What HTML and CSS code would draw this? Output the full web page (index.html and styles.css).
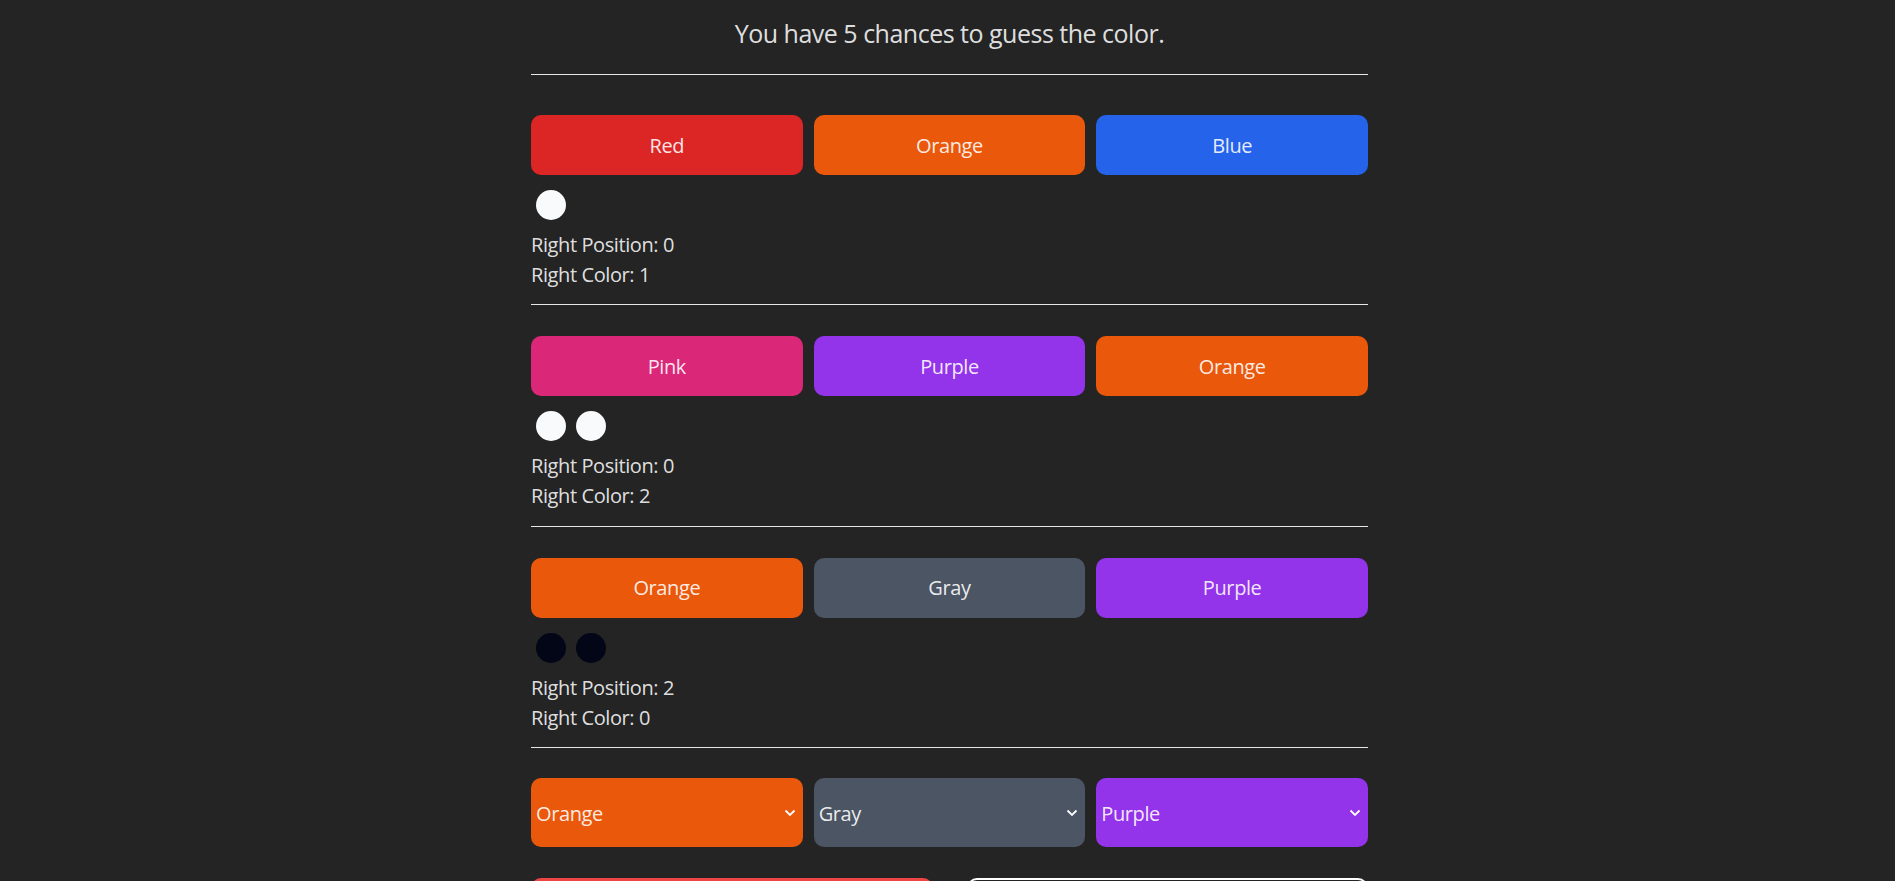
FILE: index.html
```html
<!DOCTYPE html>
<html lang="en">
<head>
<meta charset="utf-8">
<title>Guess the Color</title>
<link rel="stylesheet" href="styles.css">
</head>
<body>
<main class="game">
  <p class="title">You have 5 chances to guess the color.</p>
  <div class="rule rule-top"></div>

  <section class="attempt">
    <div class="guess">
      <button class="chip red">Red</button>
      <button class="chip orange">Orange</button>
      <button class="chip blue">Blue</button>
    </div>
    <div class="pegs">
      <span class="peg white"></span>
    </div>
    <div class="result">
      <p>Right Position: 0</p>
      <p>Right Color: 1</p>
    </div>
  </section>
  <div class="rule"></div>

  <section class="attempt">
    <div class="guess">
      <button class="chip pink">Pink</button>
      <button class="chip purple">Purple</button>
      <button class="chip orange">Orange</button>
    </div>
    <div class="pegs">
      <span class="peg white"></span>
      <span class="peg white"></span>
    </div>
    <div class="result">
      <p>Right Position: 0</p>
      <p>Right Color: 2</p>
    </div>
  </section>
  <div class="rule"></div>

  <section class="attempt">
    <div class="guess">
      <button class="chip orange">Orange</button>
      <button class="chip gray">Gray</button>
      <button class="chip purple">Purple</button>
    </div>
    <div class="pegs">
      <span class="peg black"></span>
      <span class="peg black"></span>
    </div>
    <div class="result">
      <p>Right Position: 2</p>
      <p>Right Color: 0</p>
    </div>
  </section>
  <div class="rule"></div>

  <section class="picker">
    <div class="select-wrap orange">
      <select class="select">
        <option>Orange</option>
      </select>
      <svg class="chev" viewBox="0 0 12 8" width="12" height="8"><path d="M1.5 1.5 L6 6 L10.5 1.5" fill="none" stroke="#fff" stroke-width="1.8"/></svg>
    </div>
    <div class="select-wrap gray">
      <select class="select">
        <option>Gray</option>
      </select>
      <svg class="chev" viewBox="0 0 12 8" width="12" height="8"><path d="M1.5 1.5 L6 6 L10.5 1.5" fill="none" stroke="#fff" stroke-width="1.8"/></svg>
    </div>
    <div class="select-wrap purple">
      <select class="select">
        <option>Purple</option>
      </select>
      <svg class="chev" viewBox="0 0 12 8" width="12" height="8"><path d="M1.5 1.5 L6 6 L10.5 1.5" fill="none" stroke="#fff" stroke-width="1.8"/></svg>
    </div>
  </section>

  <div class="actions">
    <button class="action submit" aria-label="Submit guess"></button>
    <button class="action reset" aria-label="Restart game"></button>
  </div>
</main>
</body>
</html>
```

FILE: styles.css
```css
* {
  box-sizing: border-box;
}

html, body {
  margin: 0;
  padding: 0;
}

body {
  background: #242424;
  color: rgba(255, 255, 255, 0.87);
  font-family: "Open Sans", "Noto Sans", sans-serif;
  font-size: 20px;
  line-height: 1.5;
  letter-spacing: -0.4px;
  padding-left: 4px;
}

.game {
  width: 837px;
  margin: 0 auto;
  display: flex;
  flex-direction: column;
}

.title {
  margin: 15px 0 0;
  font-size: 25px;
  line-height: 37px;
  text-align: center;
  letter-spacing: -0.5px;
}

.rule {
  height: 1px;
  background: #e6e6e6;
}

.rule-top {
  margin-top: 22px;
  margin-bottom: 40px;
}

.attempt {
  display: flex;
  flex-direction: column;
  padding-bottom: 14.25px;
}

.rule + .attempt {
  padding-top: 31px;
}

.rule-top + .attempt {
  padding-top: 0;
}

.guess {
  display: grid;
  grid-template-columns: repeat(3, 1fr);
  gap: 11px;
}

.chip {
  height: 60px;
  border: none;
  border-radius: 10px;
  color: rgba(255, 255, 255, 0.9);
  font-family: inherit;
  font-size: 20px;
  letter-spacing: -0.4px;
  padding: 0;
}

.red { background: #dc2626; }
.orange { background: #ea580c; }
.blue { background: #2563eb; }
.pink { background: #db2777; }
.purple { background: #9333ea; }
.gray { background: #4b5563; }

.pegs {
  display: flex;
  gap: 10px;
  padding-left: 5px;
  margin-top: 15px;
}

.peg {
  width: 30px;
  height: 30px;
  border-radius: 50%;
}

.peg.white { background: #f8fafc; }
.peg.black { background: #020617; }

.result {
  margin-top: 10px;
}

.result p {
  margin: 0;
  line-height: 30px;
}

.picker {
  display: grid;
  grid-template-columns: repeat(3, 1fr);
  gap: 11px;
  margin-top: 30px;
}

.select-wrap {
  position: relative;
  height: 69px;
  border-radius: 10px;
}

.select {
  appearance: none;
  -webkit-appearance: none;
  width: 100%;
  height: 100%;
  background: transparent;
  border: none;
  color: rgba(255, 255, 255, 0.9);
  font-family: inherit;
  font-size: 20px;
  letter-spacing: -0.4px;
  padding: 2px 0 0 5px;
  outline: none;
}

.chev {
  position: absolute;
  right: 7px;
  top: 31px;
  pointer-events: none;
}

.actions {
  display: flex;
  justify-content: space-between;
  margin-top: 31px;
}

.action {
  width: 402px;
  height: 60px;
  border-radius: 10px;
  font-family: inherit;
  font-size: 20px;
  color: #fff;
}

.submit {
  background: #ef4444;
  border: none;
}

.reset {
  background: transparent;
  border: 2px solid #fff;
  width: 401px;
}
```
